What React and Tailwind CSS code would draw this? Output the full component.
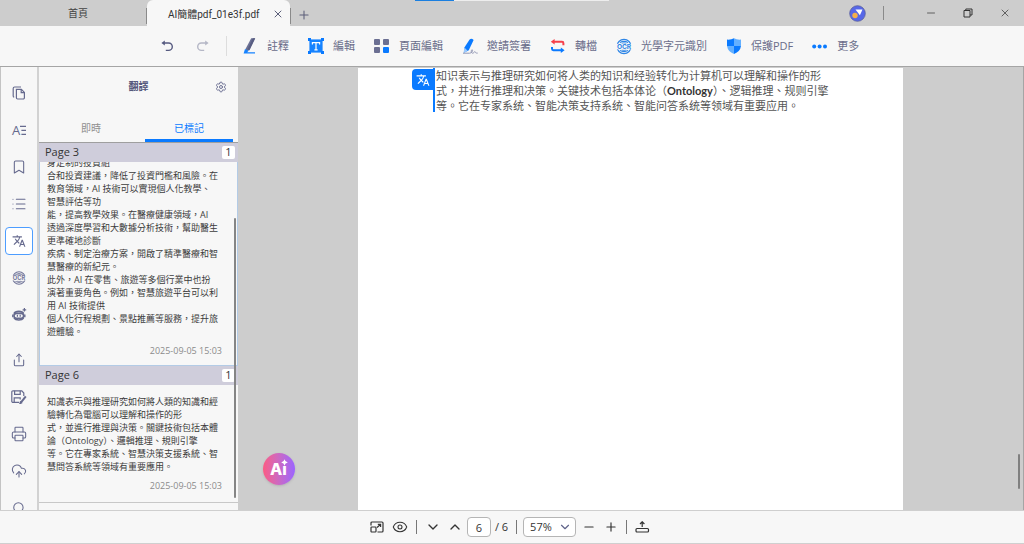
import {
  Bookmark,
  ChevronDown,
  ChevronUp,
  CloudUpload,
  Eye,
  List,
  Minus,
  Plus,
  Printer,
  Search,
  Settings,
  Share,
  X,
} from "lucide-react";
import { MdTranslate } from "react-icons/md";

const MARKS = [
  {
    page: 3,
    count: 1,
    time: "2025-09-05 15:03",
    active: true,
    lines: [
      "身定制的投資組",
      "合和投資建議，降低了投資門檻和風險。在",
      "教育領域，AI 技術可以實現個人化教學、",
      "智慧評估等功",
      "能，提高教學效果。在醫療健康領域，AI",
      "透過深度學習和大數據分析技術，幫助醫生",
      "更準確地診斷",
      "疾病、制定治療方案，開啟了精準醫療和智",
      "慧醫療的新紀元。",
      "此外，AI 在零售、旅遊等多個行業中也扮",
      "演著重要角色。例如，智慧旅遊平台可以利",
      "用 AI 技術提供",
      "個人化行程規劃、景點推薦等服務，提升旅",
      "遊體驗。",
    ],
  },
  {
    page: 6,
    count: 1,
    time: "2025-09-05 15:03",
    active: false,
    lines: [
      "知識表示與推理研究如何將人類的知識和經",
      "驗轉化為電腦可以理解和操作的形",
      "式，並進行推理與決策。關鍵技術包括本體",
      "論（Ontology）、邏輯推理、規則引擎",
      "等。它在專家系統、智慧決策支援系統、智",
      "慧問答系統等領域有重要應用。",
    ],
  },
];

function OcrIcon({ size, color, bg }) {
  return (
    <svg width={size} height={size} viewBox="0 0 18 18" fill="none" stroke={color}>
      <circle cx="9" cy="9" r="8" strokeWidth="1.4" />
      <path d="M4.4 4.6Q9 1.8 13.6 4.6M4.4 13.4Q9 16.2 13.6 13.4" strokeWidth="1.2" />
      <path d="M6.4 5.4Q9 4.4 11.600 5.4M6.4 12.900Q9 13.900 11.600 12.900" strokeWidth="1" />
      <rect x="0" y="6" width="18" height="6.2" fill={bg} stroke="none" />
      <text
        x="9"
        y="11.6"
        textAnchor="middle"
        fontFamily="Inter, sans-serif"
        fontWeight="700"
        fontSize="7.4"
        fill={color}
        stroke="none"
      >
        OCR
      </text>
    </svg>
  );
}

function AnnotateIcon() {
  return (
    <svg width="16" height="18" viewBox="0 0 16 18" fill="none">
      <path d="M9.2 1.2h4L7.4 13.2 3.4 14.6 3.8 11.6z" fill="#6b7094" />
      <path d="M10.8 1.2h2.4L7.4 13.2l-2-.6z" fill="#585d82" />
      <path d="M1.6 16.4 3 12l3.6 1.8-1.4 1.4H13v1.4z" fill="#1683ff" />
    </svg>
  );
}

function EditIcon() {
  return (
    <svg width="16" height="16" viewBox="0 0 16 16" fill="none">
      <rect x="1.4" y="1.4" width="13.2" height="13.2" fill="#1683ff" />
      <path d="M0 0h3v3H0zM13 0h3v3h-3zM0 13h3v3H0zM13 13h3v3h-3z" fill="#0a7aff" />
      <path d="M4.4 6.4V4.6h7.2v1.8M8 4.6v7M6.4 11.8h3.2" stroke="#fff" strokeWidth="1.2" />
    </svg>
  );
}

function PagesIcon() {
  return (
    <svg width="16" height="16" viewBox="0 0 16 16">
      <rect x="0" y="1" width="6" height="6" rx="1" fill="#6b6f92" />
      <rect x="9" y="1" width="6" height="6" rx="1" fill="#6b6f92" />
      <rect x="0" y="9" width="6" height="6" rx="1" fill="#6b6f92" />
      <rect x="9" y="9" width="6" height="6" rx="1" fill="#0a7aff" />
    </svg>
  );
}

function SignIcon() {
  return (
    <svg width="16" height="16" viewBox="0 0 16 16" fill="none">
      <path d="M7.6 1.4Q9.6-.4 11.6 2L6.8 12.2 2 14.8l.4-5.4z" fill="#0a7aff" />
      <path d="M2.4 9.4 1.4 15.4l4.2-2.6z" fill="#9cc9fb" />
      <path
        d="M1 15.2h6.5c2 0 3.8-2.6 2.8-3.4-1-.5-1.8 3 .2 3.4 1.5 0 1.6-1.6 2.4-1.6.6 0-.2 1.7 2.8 1.5"
        stroke="#9297b4"
      />
    </svg>
  );
}

function ConvertIcon() {
  return (
    <svg width="16" height="16" viewBox="0 0 16 16" fill="none" strokeWidth="2">
      <path d="M3 3.8h9q1.4 0 1.4 1.4v2" stroke="#f5414b" />
      <path d="M4.6 1v5.6L.8 3.8z" fill="#f5414b" />
      <path d="M2 9v1.8q0 1.4 1.4 1.4h8" stroke="#0a7aff" />
      <path d="M10.8 9.4V15l3.8-2.8z" fill="#0a7aff" />
    </svg>
  );
}

function ShieldIcon() {
  return (
    <svg width="16" height="16" viewBox="0 0 16 16">
      <path d="M1 1.6Q5 2 8 .2V8H1z" fill="#0a7aff" />
      <path d="M15 1.6Q11 2 8 .2V8h7z" fill="#64b0ff" />
      <path d="M1 8h7v8Q1.8 13.6 1 8z" fill="#64b0ff" />
      <path d="M15 8H8v8q6.2-2.4 7-8z" fill="#0a7aff" />
    </svg>
  );
}

function DotsIcon() {
  return (
    <svg width="16" height="16" viewBox="0 0 16 16" fill="#0a7aff">
      <circle cx="2.2" cy="8.4" r="2" />
      <circle cx="7.6" cy="8.4" r="2" />
      <circle cx="13" cy="8.4" r="2" />
    </svg>
  );
}

const TOOLS = [
  { label: "註釋", icon: <AnnotateIcon /> },
  { label: "編輯", icon: <EditIcon /> },
  { label: "頁面編輯", icon: <PagesIcon /> },
  { label: "邀請簽署", icon: <SignIcon /> },
  { label: "轉檔", icon: <ConvertIcon /> },
  { label: "光學字元識別", icon: <OcrIcon size={17} color="#2f86e6" bg="#f7f7f7" /> },
  { label: "保護PDF", icon: <ShieldIcon /> },
  { label: "更多", icon: <DotsIcon /> },
];

// Same arrow for undo and redo, redo is mirrored
function HistoryIcon({ redo }) {
  return (
    <svg
      width="12"
      height="12"
      viewBox="0 0 12 12"
      fill="none"
      stroke="currentColor"
      strokeWidth="1.4"
      className={redo ? "-scale-x-100" : ""}
    >
      <path d="M2 3h5.6a3.6 3.6 0 0 1 0 7.4H4.8" />
      <path d="M3.8.4v5.2L.4 3z" fill="currentColor" stroke="none" />
    </svg>
  );
}

function CopyIcon() {
  return (
    <svg width="14" height="14" viewBox="0 0 14 14" fill="none" stroke="currentColor" strokeWidth="1.2">
      <path d="M4.4 3.4h5l3 3v5.4a1.2 1.2 0 0 1-1.2 1.2H5.6a1.2 1.2 0 0 1-1.2-1.2z" />
      <path d="M9.2 3.6v3h3M9 1H2.6a1.4 1.4 0 0 0-1.4 1.4V10q0 1 1 1.2" />
    </svg>
  );
}

function TextIcon() {
  return (
    <svg width="16" height="16" viewBox="0 0 16 16" fill="none" stroke="currentColor" strokeWidth="1.2">
      <text x="1" y="13" fontFamily="Open Sans, sans-serif" fontSize="13" fill="currentColor" stroke="none">
        A
      </text>
      <path d="M9 4.4h6M10.4 8.4H15M10.4 12.4H15" />
    </svg>
  );
}

function RobotIcon() {
  return (
    <svg width="15" height="15" viewBox="0 0 15 15" fill="none" stroke="currentColor">
      <path d="M2 6.6Q3 4.4 6.8 4.4t4.800 2.200M2 11q1.400 2 4.800 2t4.800-2" strokeWidth="1.6" />
      <rect x="2" y="6.4" width="9.6" height="4.8" rx="2.4" strokeWidth="1.6" />
      <path d="M.8 7.4v2.800M12.800 7.400v2.800" strokeWidth="1.4" />
      <path d="M5.400 7.800v2M8.200 7.800v2" strokeWidth="1.2" />
      <path d="M12.400 1v3.600M10.600 2.800h3.600" strokeWidth="1.2" />
    </svg>
  );
}

function SaveEditIcon() {
  return (
    <svg width="16" height="14" viewBox="0 0 16 14" fill="none" stroke="currentColor" strokeWidth="1.2">
      <path d="M8 12.4H2A1.2 1.2 0 0 1 .8 11.2V2A1.2 1.2 0 0 1 2 .8h8.8L12.8 3v3" />
      <path d="M3.6.8v3.6h5.6V.8M3.2 12.4V7.8h6v1.6" />
      <path d="m14.8 6.4-4.8 6" strokeWidth="2" />
      <path d="M8.8 13.8l.6-2 1.2 1z" fill="currentColor" />
    </svg>
  );
}

const RAIL = [
  { label: "縮圖", icon: <CopyIcon /> },
  { label: "文字", icon: <TextIcon /> },
  { label: "書籤", icon: <Bookmark className="h-4 w-4" strokeWidth={1.6} /> },
  { label: "目錄", icon: <List className="h-4 w-4" strokeWidth={1.6} /> },
  { label: "翻譯", icon: <MdTranslate className="h-3.5 w-3.5" />, active: true },
  { label: "OCR", icon: <OcrIcon size={14} color="#72769a" bg="#f7f7f7" /> },
  { label: "AI 助理", icon: <RobotIcon /> },
];

const RAIL_ACTIONS = [
  { label: "分享", icon: <Share className="h-3.5 w-3.5" strokeWidth={1.8} /> },
  { label: "儲存", icon: <SaveEditIcon /> },
  { label: "列印", icon: <Printer className="h-4 w-4" strokeWidth={1.6} /> },
  { label: "上傳", icon: <CloudUpload className="h-4 w-4" strokeWidth={1.6} /> },
  { label: "搜尋", icon: <Search className="h-3.5 w-3.5" strokeWidth={1.8} /> },
];

function RailButton({ item }) {
  return (
    <button
      aria-label={item.label}
      className="flex h-[37px] w-full shrink-0 items-center justify-center text-[#666a8e]"
    >
      <span
        className={
          item.active
            ? "flex h-7 w-7 items-center justify-center rounded border border-[#4d9dff] bg-white"
            : "flex h-7 w-7 items-center justify-center"
        }
      >
        {item.icon}
      </span>
    </button>
  );
}

function TitleBar() {
  return (
    <header className="relative flex h-[26px] shrink-0 items-stretch bg-[#cdcdcd] text-[10px] text-[#444]">
      <button className="ml-2.5 w-[136px] shrink-0 pt-px">首頁</button>
      <span className="mt-2 h-4 w-px bg-[#8a8a8a]" />
      <div className="flex w-[143px] shrink-0 items-center justify-between rounded-t-md bg-[#f7f7f7] pt-0.5 pr-1.5 pl-[21px] text-[#333]">
        <span className="font-['Roboto','Noto_Sans_CJK_TC',sans-serif] whitespace-nowrap">
          AI簡體pdf_01e3f.pdf
        </span>
        <button aria-label="關閉分頁" className="text-[#5c5f7a]">
          <X className="h-3 w-3" />
        </button>
      </div>
      <span className="mt-2 h-4 w-px bg-[#8a8a8a]" />
      <button aria-label="新增分頁" className="ml-1.5 pt-1 text-[#5c5f7a]">
        <Plus className="h-3.5 w-3.5" strokeWidth={1.8} />
      </button>

      {/* Loading indicator */}
      <div className="absolute top-0 left-[415px] flex h-px w-[194px] bg-[#ededed]">
        <div className="w-[39px] bg-[#1b7fe0]" />
      </div>

      <div className="ml-auto flex items-center">
        <button aria-label="帳戶" className="mr-[17px]">
          <svg width="17" height="17" viewBox="0 0 17 17">
            <circle cx="8.5" cy="8.5" r="7.8" fill="#5768e8" stroke="#5a5f9c" strokeWidth=".8" />
            <path d="M6.5 4.5h7l-2.6 5.8z" fill="#fff" />
            <circle cx="6" cy="10.5" r="2.7" fill="#f6b04a" />
          </svg>
        </button>
        <span className="mr-7 h-3.5 w-px bg-[#8a8a8a]" />
        <button aria-label="最小化" className="flex w-[37px] justify-center">
          <Minus className="h-3 w-3" strokeWidth={1.6} />
        </button>
        <button aria-label="還原" className="flex w-[37px] justify-center">
          <svg width="10" height="10" viewBox="0 0 10 10" fill="none" stroke="#333">
            <path d="M1 2.5h6v6.5H1zM2.8 2.5V1H9v6H7" />
          </svg>
        </button>
        <button aria-label="關閉" className="mr-px flex w-[37px] justify-center">
          <X className="h-3 w-3" strokeWidth={1.6} />
        </button>
      </div>
    </header>
  );
}

function Toolbar() {
  return (
    <nav className="flex h-[41px] shrink-0 items-center border-b border-[#a5a5a5] bg-[#f7f7f7] text-[11px] text-[#6a6d8a]">
      <div className="ml-[161px] flex items-center gap-6">
        <button aria-label="復原" className="text-[#565a80]">
          <HistoryIcon />
        </button>
        <button aria-label="重做" className="text-[#b5b7c6]">
          <HistoryIcon redo />
        </button>
      </div>
      <span className="mr-[15px] ml-[17px] h-5 w-px bg-[#ddd]" />
      <div className="flex items-center gap-[19px]">
        {TOOLS.map((tool) => (
          <button key={tool.label} className="flex items-center gap-[9px] whitespace-nowrap">
            <span className="flex w-4 shrink-0 justify-end">{tool.icon}</span>
            {tool.label}
          </button>
        ))}
      </div>
    </nav>
  );
}

function MarkSection({ mark }) {
  return (
    <section>
      <h3 className="flex h-[19px] items-center justify-between bg-[#cfcddb] pr-[3px] pl-1.5 text-[11px] text-[#333]">
        Page {mark.page}
        <span className="flex h-[13px] w-[13px] items-center justify-center rounded-xs bg-white">
          {mark.count}
        </span>
      </h3>
      <div
        className={
          mark.active
            ? "flex h-[204px] flex-col justify-end overflow-hidden border border-t-0 border-[#b3cbe6] px-[7px] pb-2"
            : "border-b border-[#c8c8c8] px-2 pt-2.5 pb-2.5"
        }
      >
        <p className="text-[9px] leading-[13px] whitespace-nowrap text-[#3c3c3c]">
          {mark.lines.map((line) => (
            <span key={line} className="block">
              {line}
            </span>
          ))}
        </p>
        <time className="mt-1.5 mr-2 block text-right text-[9px] leading-[13px] text-[#8b8b8b]">
          {mark.time}
        </time>
      </div>
    </section>
  );
}

function TranslatePanel() {
  return (
    <aside className="relative flex w-[199px] shrink-0 flex-col overflow-hidden bg-[#f7f7f7]">
      <div className="relative flex h-[39px] shrink-0 items-center justify-center text-[10px]">
        <h2 className="font-bold text-[#55587c]">翻譯</h2>
        <button aria-label="設定" className="absolute right-[11px] text-[#6f7396]">
          <Settings className="h-3 w-3" />
        </button>
      </div>
      <div className="mt-3 grid h-6 shrink-0 grid-cols-2 gap-x-3 pr-[5px] pl-1.5 text-[10px]">
        <button className="pb-1 pl-1 text-[#8f8f8f]">即時</button>
        <button className="border-b-3 border-[#0a7aff] pb-px text-[#0a7aff]">已標記</button>
      </div>
      <div className="min-h-0 flex-1 overflow-hidden border-t border-[#9f9f9f]">
        {MARKS.map((mark) => (
          <MarkSection key={mark.page} mark={mark} />
        ))}
      </div>
      {/* Scroll thumb */}
      <div className="absolute top-[151px] right-0.5 h-[280px] w-0.5 rounded-full bg-[#858585]" />
    </aside>
  );
}

function Viewer() {
  return (
    <main className="relative min-w-0 flex-1 overflow-hidden border-r border-[#a5a5a5] bg-[#cdcdcd] px-[120px]">
      <article className="mt-px h-full bg-white pl-[54px]">
        <div className="flex">
          <button
            aria-label="翻譯段落"
            className="mt-px flex h-[21px] w-[21px] shrink-0 items-center justify-center rounded-l bg-[#0a7aff] text-white"
          >
            <MdTranslate className="h-3.5 w-3.5" />
          </button>
          <p className="h-11 border-l-2 border-[#0a7aff] pl-px text-[11px] leading-[15px] whitespace-nowrap text-[#555]">
            知识表示与推理研究如何将人类的知识和经验转化为计算机可以理解和操作的形
            <br />
            式，并进行推理和决策。关键技术包括本体论（
            <span className="font-['Lato'] font-bold text-[#333]">Ontology</span>
            ）、逻辑推理、规则引擎
            <br />
            等。它在专家系统、智能决策支持系统、智能问答系统等领域有重要应用。
          </p>
        </div>
      </article>

      <button
        aria-label="AI 助理"
        className="absolute bottom-[25px] left-[25px] flex h-8 w-8 items-center justify-center rounded-full bg-linear-to-r from-[#fb5b83] to-[#9b63ff] shadow"
      >
        <svg width="32" height="32" viewBox="0 0 32 32" fill="#fff">
          <text x="7" y="22" fontFamily="Inter, sans-serif" fontWeight="800" fontSize="16">
            Aı
          </text>
          <path d="M21.5 6.2Q22 9 24.8 9.500 22 10 21.5 12.800 21 10 18.200 9.500 21 9 21.5 6.200z" />
        </svg>
      </button>
      <div className="absolute right-[3px] bottom-[21px] h-[35px] w-0.5 rounded-full bg-[#808080]" />
    </main>
  );
}

function StatusBar() {
  return (
    <footer className="flex h-[34px] shrink-0 items-center justify-center border-t border-b border-[#cfcfcf] bg-[#f7f7f7] pr-1 text-[11px] text-[#333]">
      <button aria-label="符合視窗" className="mr-2">
        <svg width="14" height="12" viewBox="0 0 14 12" fill="none" stroke="currentColor" strokeWidth="1.2">
          <path d="M1 4.5V2A1 1 0 0 1 2 1h10a1 1 0 0 1 1 1v8a1 1 0 0 1-1 1H7.5" />
          <rect x="1" y="6" width="5" height="5" rx=".8" />
          <path d="M7 6.5 10.5 3.5M7.8 3.4h2.8V6" />
        </svg>
      </button>
      <button aria-label="閱讀模式">
        <Eye className="h-4 w-4" strokeWidth={1.6} />
      </button>
      <span className="mx-2 h-3.5 w-px bg-[#777]" />
      <button aria-label="下一頁" className="mr-1.5">
        <ChevronDown className="h-4 w-4" />
      </button>
      <button aria-label="上一頁" className="mr-1">
        <ChevronUp className="h-4 w-4" />
      </button>
      <input
        aria-label="頁碼"
        defaultValue="6"
        className="h-5 w-6 rounded border border-[#b5b5b5] bg-white text-center"
      />
      <span className="ml-1 whitespace-nowrap">/ 6</span>
      <span className="mr-1.5 ml-2 h-3.5 w-px bg-[#777]" />
      <div className="relative flex items-center">
        <select
          aria-label="縮放"
          defaultValue="57%"
          className="h-5 w-[53px] appearance-none rounded border border-[#b5b5b5] bg-white pl-1.5"
        >
          <option>57%</option>
          <option>100%</option>
        </select>
        <ChevronDown className="pointer-events-none absolute right-1 h-3.5 w-3.5 text-[#60648a]" />
      </div>
      <button aria-label="縮小" className="ml-1.5">
        <Minus className="h-3.5 w-3.5" />
      </button>
      <button aria-label="放大" className="ml-2">
        <Plus className="h-3.5 w-3.5" />
      </button>
      <span className="mx-2 h-3.5 w-px bg-[#777]" />
      <button aria-label="匯出">
        <svg width="15" height="12" viewBox="0 0 15 12" fill="none" stroke="currentColor" strokeWidth="1.2">
          <rect x="1" y="7.5" width="12.5" height="3.5" rx="1" />
          <path d="M7.2 6V1M5 3l2.2-2.2L9.4 3" />
        </svg>
      </button>
    </footer>
  );
}

export default function App() {
  return (
    <div
      lang="zh-Hant"
      className="flex h-screen flex-col overflow-hidden bg-[#f7f7f7] font-['Open_Sans','Noto_Sans_CJK_TC',sans-serif]"
    >
      <TitleBar />
      <Toolbar />
      <div className="flex min-h-0 flex-1 border-l border-[#c4c4c4]">
        <nav className="flex w-[38px] shrink-0 flex-col overflow-hidden border-r-2 border-[#d2d2d2] pt-[7px]">
          {RAIL.map((item) => (
            <RailButton key={item.label} item={item} />
          ))}
          <div className="mt-2">
            {RAIL_ACTIONS.map((item) => (
              <RailButton key={item.label} item={item} />
            ))}
          </div>
        </nav>
        <TranslatePanel />
        <Viewer />
      </div>
      <StatusBar />
    </div>
  );
}
